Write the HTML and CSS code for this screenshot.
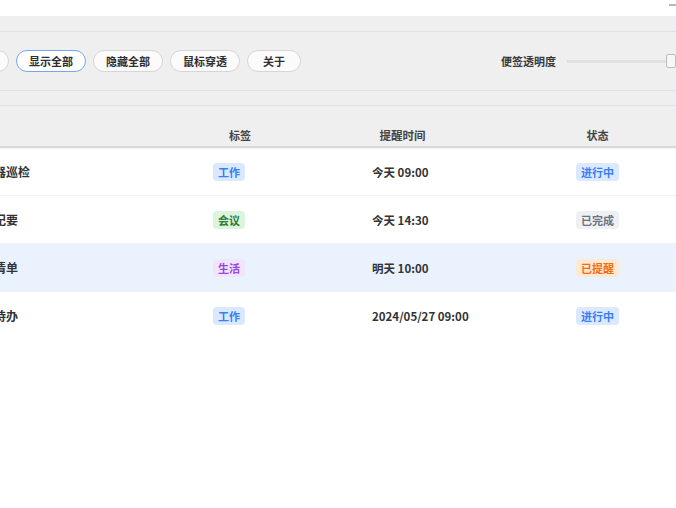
FILE: index.html
```html
<!DOCTYPE html>
<html lang="zh-CN">
<head>
    <meta charset="UTF-8">
    <meta name="viewport" content="width=device-width, initial-scale=1.0">
    <title>便签提醒</title>
    <link rel="stylesheet" href="styles.css">
</head>
<body>
    <div class="window">
        <div class="titlebar">
            <span class="min-btn"></span>
        </div>
        <div class="topline"></div>
        <div class="toolbar">
            <div class="btn-group">
                <button class="btn">新建便签</button>
                <button class="btn active">显示全部</button>
                <button class="btn">隐藏全部</button>
                <button class="btn">鼠标穿透</button>
                <button class="btn">关于</button>
            </div>
            <div class="opacity">
                <span class="opacity-label">便签透明度</span>
                <div class="slider">
                    <span class="thumb"></span>
                </div>
            </div>
        </div>
        <div class="filterbar"></div>
        <div class="table">
            <div class="row head">
                <div class="cell title">标题</div>
                <div class="cell tag">标签</div>
                <div class="cell time">提醒时间</div>
                <div class="cell status">状态</div>
                <div class="cell"></div>
            </div>
            <div class="row">
                <div class="cell title">服务器巡检</div>
                <div class="cell tag"><span class="pill blue">工作</span></div>
                <div class="cell time">今天 09:00</div>
                <div class="cell status"><span class="pill blue">进行中</span></div>
                <div class="cell"></div>
            </div>
            <div class="row">
                <div class="cell title">会议纪要</div>
                <div class="cell tag"><span class="pill green">会议</span></div>
                <div class="cell time">今天 14:30</div>
                <div class="cell status"><span class="pill gray">已完成</span></div>
                <div class="cell"></div>
            </div>
            <div class="row selected">
                <div class="cell title">购物清单</div>
                <div class="cell tag"><span class="pill purple">生活</span></div>
                <div class="cell time">明天 10:00</div>
                <div class="cell status"><span class="pill orange">已提醒</span></div>
                <div class="cell"></div>
            </div>
            <div class="row">
                <div class="cell title">周报待办</div>
                <div class="cell tag"><span class="pill blue">工作</span></div>
                <div class="cell time">2024/05/27 09:00</div>
                <div class="cell status"><span class="pill blue">进行中</span></div>
                <div class="cell"></div>
            </div>
        </div>
    </div>
</body>
</html>
```

FILE: styles.css
```css
:root {
    --text-color: #333333;
    --line-color: #dde2e8;
    --panel-color: #efefef;
}
body {
    margin: 0;
    font-family: "Noto Sans CJK SC", "Noto Sans", sans-serif;
    color: var(--text-color);
    background: #ffffff;
    overflow: hidden;
}
.window {
    width: 780px;
    margin-left: -90px; /* the window is wider than the view, left part is off screen */
}
.titlebar {
    height: 16px;
    display: flex;
    justify-content: flex-end;
    background: #ffffff;
}
.min-btn {
    width: 10px;
    height: 2px;
    margin: 4px 11px 0 0;
    background: #b8b8b8;
}
.topline {
    height: 15px;
    background: var(--panel-color);
    border-bottom: 1px solid var(--line-color);
}
.toolbar {
    height: 58px;
    display: flex;
    align-items: center;
    justify-content: space-between;
    padding: 0 10px 0 29px;
    background: var(--panel-color);
    border-bottom: 1px solid var(--line-color);
}
.btn-group {
    display: flex;
    gap: 7px;
}
.btn {
    height: 22px;
    min-width: 54px;
    padding: 0 12px;
    border: 1px solid #d6d6d6;
    border-radius: 11px;
    background: #fbfbfb;
    font-family: inherit;
    font-size: 11px;
    font-weight: bold;
    color: #2e2e2e;
    line-height: 20px;
}
.btn.active {
    border-color: #76a6f2;
    background: #ffffff;
}
.opacity {
    display: flex;
    align-items: center;
    gap: 11px;
}
.opacity-label {
    font-size: 11px;
    font-weight: bold;
    color: #3a3a3a;
}
.slider {
    width: 113px;
    height: 14px;
    display: flex;
    justify-content: flex-end;
    background: linear-gradient(#e0e0e0, #e0e0e0) center / 100% 3px no-repeat;
}
.thumb {
    width: 8px;
    height: 12px;
    margin-right: 4px;
    border: 1px solid #bcbcbc;
    border-radius: 2px;
    background: #f6f6f6;
}
.filterbar {
    height: 14px;
    background: var(--panel-color);
    border-bottom: 1px solid var(--line-color);
}
.table {
    background: #ffffff;
}
.row {
    display: grid;
    grid-template-columns: 290px 80px 245px 145px 1fr;
    height: 47px;
    align-items: center;
    border-bottom: 1px solid #f1f1f1;
    font-size: 12px;
    font-weight: bold;
}
.row:last-child {
    border-bottom: none;
}
.row.head {
    height: 39px;
    align-items: end;
    padding-bottom: 1px;
    background: var(--panel-color);
    border-bottom: 2px solid #d9d9d9;
    box-shadow: 0 1px 2px rgba(0, 0, 0, 0.06);
    font-size: 11px;
    color: #444444;
}
.row.head .cell {
    text-align: center;
    padding: 0 0 2px;
}
.row.head .title {
    text-align: left;
    padding-left: 60px;
}
.row.selected {
    background: #eaf2fe;
}
.cell.title {
    padding-left: 60px;
}
.cell.tag {
    padding-left: 13px;
}
.cell.time {
    padding-left: 92px;
    font-size: 11.5px;
}
.cell.status {
    text-align: center;
}
.pill {
    display: inline-block;
    height: 18px;
    line-height: 18px;
    padding: 0 5px;
    border-radius: 4px;
    font-size: 11px;
    font-weight: bold;
}
.pill.blue {
    background: #dbe9fe;
    color: #3a7ef4;
}
.pill.green {
    background: #dcf4dd;
    color: #2e7b3a;
}
.pill.purple {
    background: #f1e5fe;
    color: #9846e0;
}
.pill.gray {
    background: #eef0f3;
    color: #6b7280;
}
.pill.orange {
    background: #ffe8d4;
    color: #ef6d17;
}
```
